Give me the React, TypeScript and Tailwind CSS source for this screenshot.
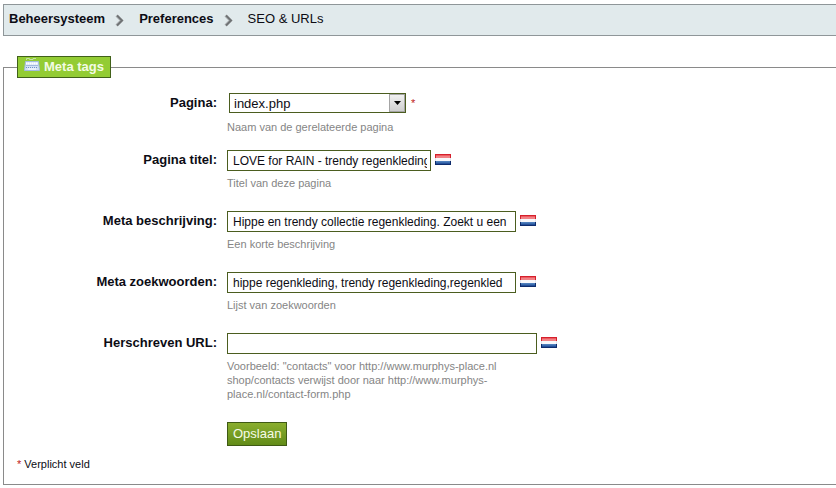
import type { ReactNode } from "react";

function Chevron() {
  return (
    <svg width="9" height="13" viewBox="0 0 9 13" fill="none" aria-hidden="true">
      <path d="M1.5 1.5 6.5 6.5 1.5 11.5" stroke="#b4b9bb" strokeWidth="3" />
      <path d="M2 1.5 7 6.5 2 11.5" stroke="#707375" strokeWidth="2" />
    </svg>
  );
}

function KeyboardIcon() {
  return (
    <svg width="16" height="16" viewBox="0 0 16 16" aria-hidden="true">
      <path d="M2.5 3V1.5H5.500V2.500H9V1.500H12" fill="none" stroke="#c5e0a8" strokeWidth="1" />
      <path d="M1.500 4.500H14.500L15.500 13.500H.5Z" fill="#d3e2f5" stroke="#a3bbe0" />
      <path d="M2 6.500H14" stroke="#ffffff" strokeWidth="2" strokeDasharray="1.500 .5" />
      <path d="M2.500 8.500H13.500M2 10.500H14" stroke="#6f8fc9" strokeDasharray="1 1" />
      <path d="M4 12H12" stroke="#ffffff" />
    </svg>
  );
}

function DutchFlag() {
  return (
    <svg
      className="mt-1 shrink-0"
      width="16"
      height="11"
      viewBox="0 0 16 11"
      role="img"
      aria-label="Nederlands"
    >
      <rect width="16" height="4" fill="#d5202c" />
      <rect x="1" y="1" width="14" height="1" fill="#ee5a60" />
      <rect x="1" y="2" width="14" height="2" fill="#f08286" />
      <rect y="4" width="16" height="3" fill="#e2e4ec" />
      <rect x="1" y="4" width="14" height="3" fill="#f8f8fb" />
      <rect y="7" width="16" height="4" fill="#0e2c6c" />
      <rect x="1" y="7" width="14" height="1" fill="#4f7fbc" />
      <rect x="1" y="8" width="14" height="1" fill="#3c6cae" />
      <rect x="1" y="9" width="14" height="1" fill="#24509a" />
    </svg>
  );
}

type RowProps = { id: string; label: string; hint: string; children: ReactNode; className?: string };

function Row({ id, label, hint, children, className = "mb-[21px] gap-[5px]" }: RowProps) {
  return (
    <div className="flex items-start gap-[10px]">
      <label htmlFor={id} className="w-[200px] shrink-0 text-right text-[13px] leading-5 font-bold">
        {label}
      </label>
      <div className={`flex min-w-0 flex-col ${className}`}>
        <div className="flex items-start gap-1">{children}</div>
        <p className="max-w-[300px] text-[11px] leading-[14px] text-[#858585]">{hint}</p>
      </div>
    </div>
  );
}

const inputStyle = "h-[21px] border border-[#4b5d1f] bg-white pr-[3px] pl-[5px] text-[12px] outline-none";

export default function App() {
  return (
    <div className="bg-white pt-1 pl-[3px] font-['Liberation_Sans',Arial,sans-serif] text-[#0c0c14]">
      <nav className="flex h-8 items-center border border-r-0 border-[#8f9699] bg-[#e1eaec] px-[5px] pb-[3px] text-[13px]">
        <a href="#beheer" className="font-bold">Beheersysteem</a>
        <span className="mr-[15px] ml-[10px] pt-1"><Chevron /></span>
        <a href="#preferences" className="font-bold">Preferences</a>
        <span className="mr-[15px] ml-[10px] pt-1"><Chevron /></span>
        <span>SEO &amp; URLs</span>
      </nav>

      <form onSubmit={(e) => e.preventDefault()}>
        <fieldset className="mt-5 border border-r-0 border-[#8a8a8a] px-[13px] pb-[13px]">
          <legend className="flex h-[22px] items-center gap-1 border border-[#41611a] bg-[#93cc34] px-[6px] text-[13px] font-bold text-[#f3fbe6]">
            <span className="pb-1"><KeyboardIcon /></span>
            Meta tags
          </legend>

          <div className="pt-[15px]">
            <Row id="pagina" label="Pagina:" hint="Naam van de gerelateerde pagina" className="mb-4 gap-[7px]">
              <div className="relative ml-[2px]">
                <select
                  id="pagina"
                  defaultValue="index.php"
                  className="block h-5 w-[177px] appearance-none border border-[#4b5d1f] bg-white pl-1 text-[13px] outline-none"
                >
                  <option>index.php</option>
                </select>
                <span className="pointer-events-none absolute top-px right-px flex h-[18px] w-4 items-center justify-center border border-[#a4a4a4] bg-linear-to-b from-[#f0f0f0] to-[#cfcfcf]">
                  <svg width="7" height="4" viewBox="0 0 7 4" aria-hidden="true">
                    <path d="M0 0H7L3.500 4Z" fill="#000" />
                  </svg>
                </span>
              </div>
              <span className="pl-px text-[11px] leading-5 text-[#c01818]">*</span>
            </Row>

            <Row id="titel" label="Pagina titel:" hint="Titel van deze pagina">
              <input id="titel" className={`${inputStyle} w-[204px]`} defaultValue="LOVE for RAIN - trendy regenkleding" />
              <DutchFlag />
            </Row>

            <Row id="beschrijving" label="Meta beschrijving:" hint="Een korte beschrijving">
              <input
                id="beschrijving"
                className={`${inputStyle} w-[289px]`}
                defaultValue="Hippe en trendy collectie regenkleding. Zoekt u een"
              />
              <DutchFlag />
            </Row>

            <Row id="zoekwoorden" label="Meta zoekwoorden:" hint="Lijst van zoekwoorden">
              <input
                id="zoekwoorden"
                className={`${inputStyle} w-[289px]`}
                defaultValue="hippe regenkleding, trendy regenkleding,regenkled"
              />
              <DutchFlag />
            </Row>

            <Row
              id="url"
              label="Herschreven URL:"
              hint={'Voorbeeld: "contacts" voor http://www.murphys-place.nl shop/contacts verwijst door naar http://www.murphys-place.nl/contact-form.php'}
            >
              <input id="url" className={`${inputStyle} w-[310px]`} />
              <DutchFlag />
            </Row>

            <button
              type="submit"
              className="ml-[210px] flex h-6 items-center border border-[#3f5a14] bg-linear-to-b from-[#8aae2e] to-[#628c18] px-[5px] text-[13px] text-[#f6fbe8]"
            >
              Opslaan
            </button>
          </div>

          <p className="mt-[11px] text-[11px] leading-[14px]">
            <span className="text-[#c01818]">*</span> Verplicht veld
          </p>
        </fieldset>
      </form>
    </div>
  );
}
